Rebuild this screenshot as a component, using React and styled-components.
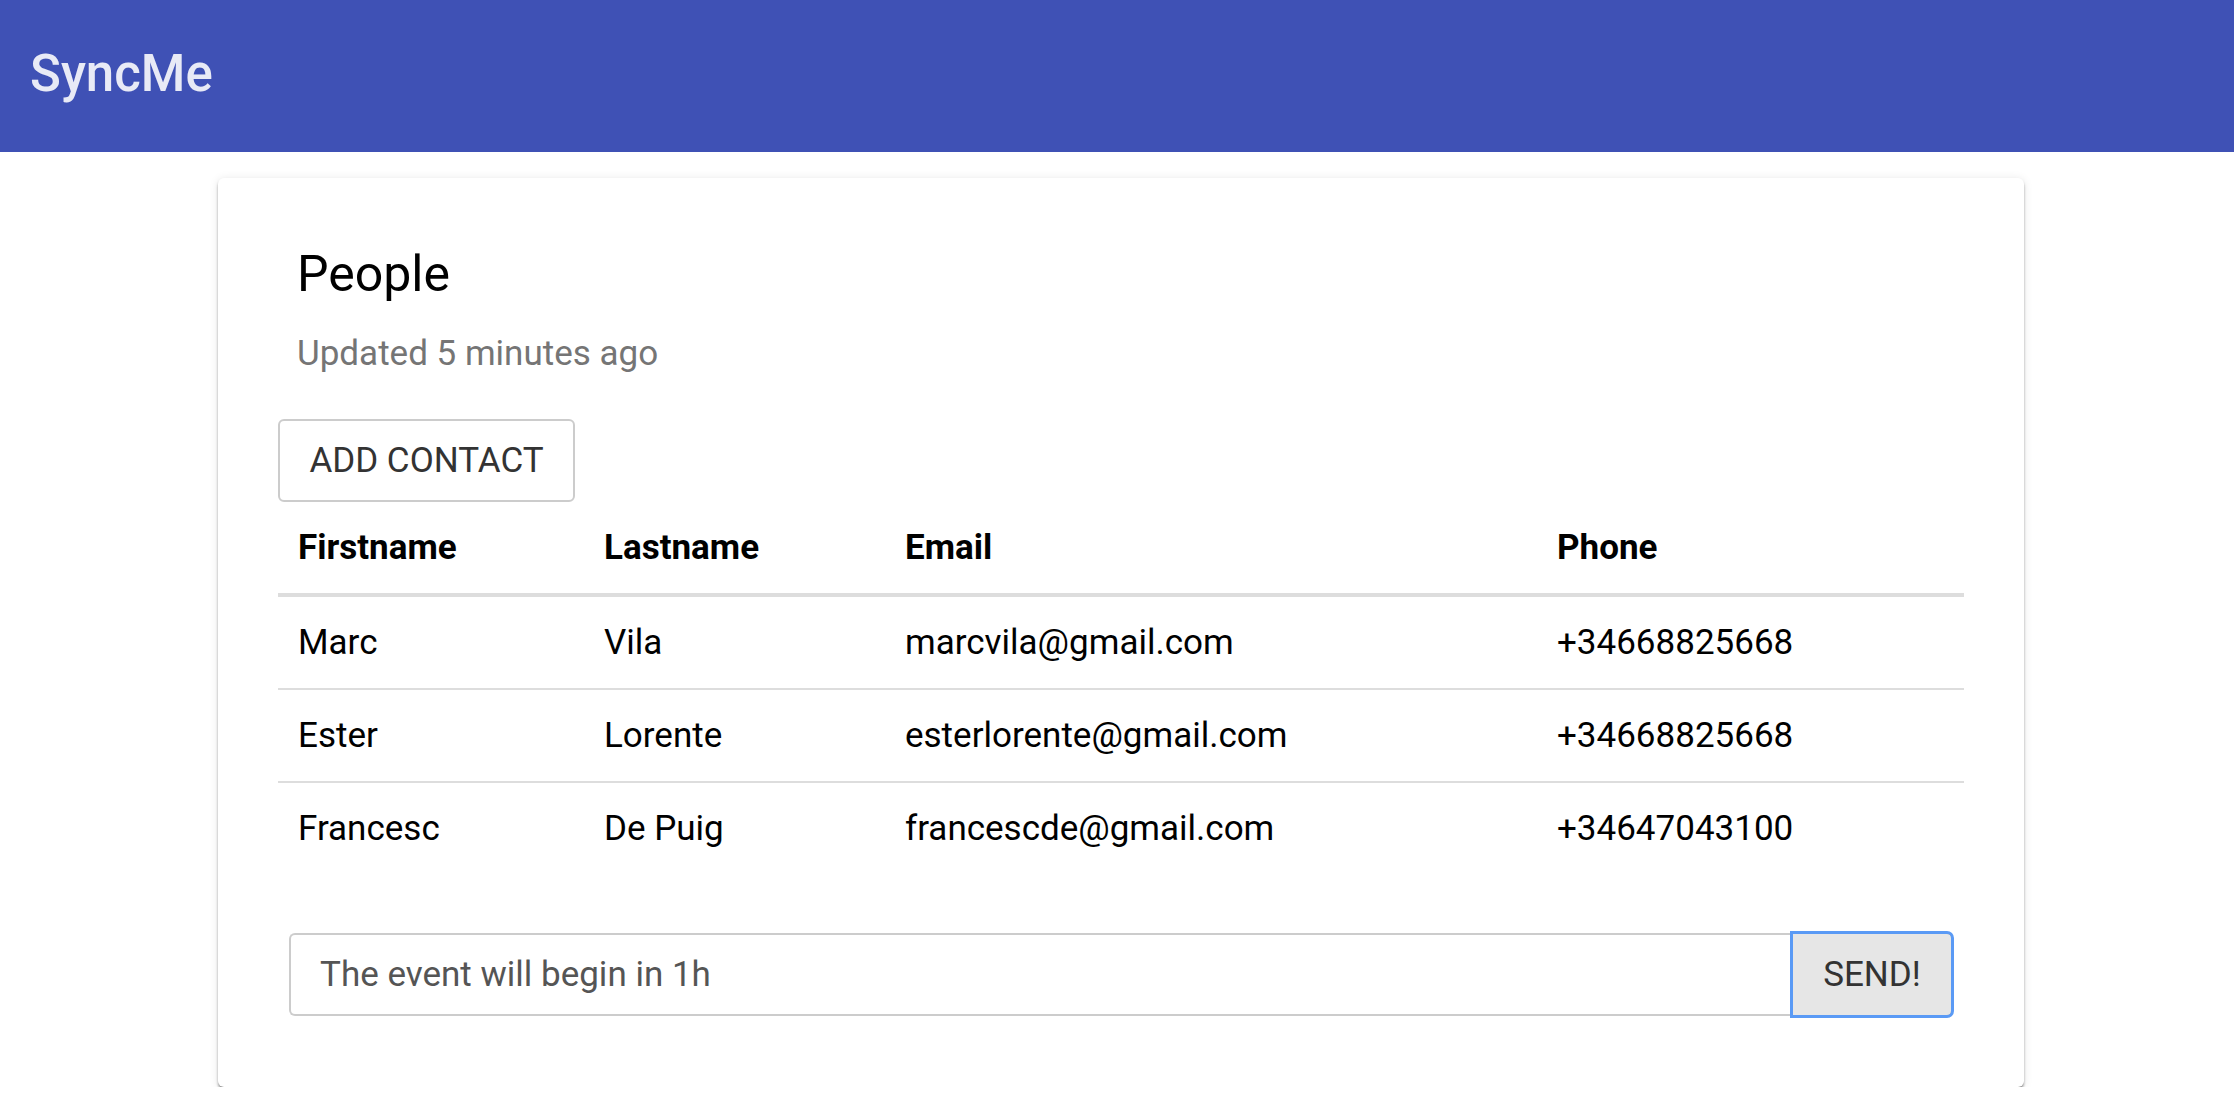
import React from 'react';
import styled, { createGlobalStyle } from 'styled-components';

const GlobalStyle = createGlobalStyle`
  html, body {
    margin: 0;
    padding: 0;
    background: #fff;
    font-family: Roboto, "Liberation Sans", Arial, sans-serif;
  }
  * {
    box-sizing: border-box;
  }
`;

const AppBar = styled.header`
  display: flex;
  align-items: center;
  height: 152px;
  padding: 0 0 6px 30px;
  background: #3f51b5;
`;

const Brand = styled.h1`
  margin: 0;
  font-size: 51px;
  font-weight: 500;
  color: #e8eaf6;
  letter-spacing: 0;
`;

const Card = styled.section`
  margin: 26px 210px 0 218px;
  padding: 65px 60px 70px 60px;
  background: #fff;
  border-radius: 6px;
  box-shadow: 0 3px 3px -1px rgba(0, 0, 0, 0.45), 0 2px 3px 0 rgba(0, 0, 0, 0.14),
    0 1px 10px 0 rgba(0, 0, 0, 0.1);
`;

const Heading = styled.div`
  padding-left: 19px;
`;

const Title = styled.h2`
  margin: 0;
  font-size: 50px;
  line-height: 62px;
  font-weight: 400;
  color: #000;
`;

const Subtitle = styled.p`
  margin: 28px 0 0 0;
  font-size: 35px;
  line-height: 42px;
  color: #757575;
`;

const OutlineButton = styled.button`
  display: block;
  margin-top: 44px;
  height: 83px;
  width: 297px;
  padding: 0;
  background: #fff;
  border: 2px solid #ccc;
  border-radius: 6px;
  font-family: inherit;
  font-size: 35px;
  color: #333;
  text-transform: uppercase;
`;

const Table = styled.table`
  width: 100%;
  border-collapse: collapse;
  table-layout: fixed;
  font-size: 35px;
  line-height: 49px;
  color: #000;
`;

const Th = styled.th`
  width: ${(p) => p.$w}px;
  padding: 21px 20px;
  text-align: left;
  font-weight: 700;
  border-bottom: 4px solid #ddd;
`;

const Td = styled.td`
  padding: 21px 20px;
  text-align: left;
  white-space: nowrap;
`;

const Tr = styled.tr`
  & + & > td {
    border-top: 2px solid #ddd;
  }
`;

const InputGroup = styled.div`
  display: flex;
  margin-top: 59px;
  padding: 0 11px;
`;

const TextInput = styled.input`
  flex: 1;
  height: 83px;
  padding: 0 29px;
  border: 2px solid #ccc;
  border-right: none;
  border-radius: 6px 0 0 6px;
  font-family: inherit;
  font-size: 35px;
  color: #555;
  outline: none;
`;

const SendButton = styled.button`
  width: 162px;
  height: 85px;
  margin-top: -1px;
  padding: 0;
  background: #e6e6e6;
  border: 2px solid #adadad;
  border-radius: 0 6px 6px 0;
  outline: 3px solid #5a9af5;
  outline-offset: -2px;
  font-family: inherit;
  font-size: 35px;
  color: #333;
`;

const columns = [
  { label: 'Firstname', width: 306 },
  { label: 'Lastname', width: 301 },
  { label: 'Email', width: 652 },
  { label: 'Phone', width: 427 },
];

const people = [
  ['Marc', 'Vila', 'marcvila@gmail.com', '+34668825668'],
  ['Ester', 'Lorente', 'esterlorente@gmail.com', '+34668825668'],
  ['Francesc', 'De Puig', 'francescde@gmail.com', '+34647043100'],
];

export default function App() {
  return (
    <>
      <GlobalStyle />
      <AppBar>
        <Brand>SyncMe</Brand>
      </AppBar>
      <Card>
        <Heading>
          <Title>People</Title>
          <Subtitle>Updated 5 minutes ago</Subtitle>
        </Heading>
        <OutlineButton>Add contact</OutlineButton>
        <Table>
          <thead>
            <tr>
              {columns.map((c) => (
                <Th key={c.label} $w={c.width}>
                  {c.label}
                </Th>
              ))}
            </tr>
          </thead>
          <tbody>
            {people.map((row) => (
              <Tr key={row[2]}>
                {row.map((cell, i) => (
                  <Td key={i}>{cell}</Td>
                ))}
              </Tr>
            ))}
          </tbody>
        </Table>
        <InputGroup>
          <TextInput defaultValue="The event will begin in 1h" />
          <SendButton>SEND!</SendButton>
        </InputGroup>
      </Card>
    </>
  );
}
